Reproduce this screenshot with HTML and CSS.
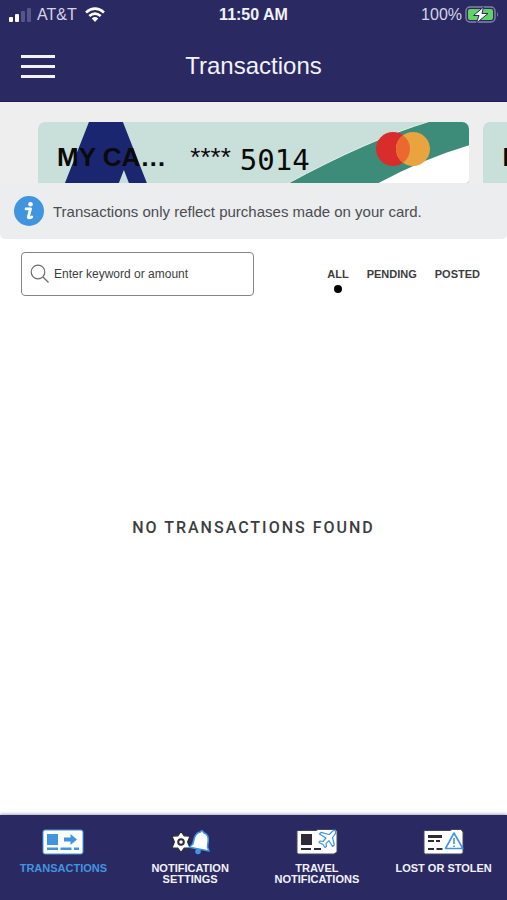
FILE: index.html
```html
<!DOCTYPE html>
<html lang="en">
<head>
<meta charset="utf-8">
<meta name="viewport" content="width=device-width, initial-scale=1">
<title>Transactions</title>
<link rel="stylesheet" href="styles.css">
</head>
<body>
<header class="top">
  <div class="status">
    <div class="status-side">
      <svg width="24" height="16" viewBox="0 0 24 16" aria-hidden="true">
        <g fill="#fff"><rect x="1" y="10" width="4" height="5" rx="1"/><rect x="7" y="7" width="4" height="8" rx="1"/></g>
        <g fill="#56548a"><rect x="13" y="4" width="4" height="11" rx="1"/><rect x="19" y="1" width="4" height="14" rx="1"/></g>
      </svg>
      <span>AT&amp;T</span>
      <svg class="wifi" width="20" height="16" viewBox="0 0 20 16" aria-hidden="true">
        <g fill="none" stroke="#fff" stroke-width="2.6"><path d="M1 5.4Q10-2.2 19 5.4"/><path d="M4.3 9Q10 4.1 15.7 9"/></g>
        <path d="M6.8 11.4Q10 8.8 13.2 11.4L10 15Z" fill="#fff"/>
      </svg>
    </div>
    <time class="clock">11:50 AM</time>
    <div class="status-side status-right">
      <span>100%</span>
      <svg width="34" height="18" viewBox="0 0 34 18" aria-hidden="true">
        <rect x="1" y="1" width="29" height="15" rx="4" fill="none" stroke="#8583a6" stroke-width="1.4"/>
        <rect x="3" y="3" width="25" height="11" rx="2" fill="#63d264"/>
        <path d="M32 6Q34 8.500 32 11Z" fill="#8583a6"/>
        <path d="M18.500 1L8.500 9.500H14L11.500 17L23 7.500H17Z" fill="#fff" stroke="#2b2962" stroke-width="1"/>
      </svg>
    </div>
  </div>
  <div class="bar">
    <button class="menu" type="button" aria-label="Menu"><span></span><span></span><span></span></button>
    <h1>Transactions</h1>
  </div>
</header>
<main>
  <section class="cards" aria-label="Cards">
    <article class="card">
      <svg class="art" viewBox="0 0 432 61" preserveAspectRatio="none" aria-hidden="true">
        <path d="M51 0H85L109 61H91L86 48L81 61H27Z" fill="#1a2670"/>
        <path d="M249 62Q330 18 393-1H433V62Z" fill="#3d8c7a" stroke="#e2f0ed"/>
        <path d="M341 61Q385 37 432 23V61Z" fill="#fff"/>
      </svg>
      <span class="card-name">MY CA…</span>
      <span class="stars">****</span>
      <span class="digits">5014</span>
      <svg class="brand" width="54" height="36" viewBox="0 0 54 36" aria-hidden="true">
        <circle cx="17" cy="18" r="17" fill="#d92d2b"/><circle cx="37" cy="18" r="17" fill="#e9a33f"/>
        <path d="M27 4.250A17 17 0 0 1 27 31.750A17 17 0 0 1 27 4.250Z" fill="#eb692f"/>
      </svg>
    </article>
    <article class="card"><span class="card-name">MY CA…</span></article>
  </section>
  <p class="notice">
    <svg width="30" height="30" viewBox="0 0 30 30" aria-hidden="true">
      <circle cx="15" cy="15" r="15" fill="#4195df"/>
      <circle cx="16.500" cy="8.200" r="2.300" fill="#fff"/>
      <path d="M12 12.800H16.500L14.300 21.200Q14.200 22.800 17.800 20.900" fill="none" stroke="#fff" stroke-width="2.800" stroke-linejoin="round" stroke-linecap="round"/>
    </svg>
    <span>Transactions only reflect purchases made on your card.</span>
  </p>
  <div class="tools">
    <label class="search">
      <svg width="20" height="20" viewBox="0 0 20 20" fill="none" stroke="#6b6b6b" stroke-width="1.200" aria-hidden="true"><circle cx="8" cy="8" r="6.800"/><path d="M13 13L18.500 18.500"/></svg>
      <input type="search" placeholder="Enter keyword or amount" aria-label="Enter keyword or amount">
    </label>
    <div class="filters">
      <button type="button" class="active" aria-pressed="true">ALL</button>
      <button type="button" aria-pressed="false">PENDING</button>
      <button type="button" aria-pressed="false">POSTED</button>
    </div>
  </div>
  <p class="empty">NO TRANSACTIONS FOUND</p>
</main>
<nav>
  <a class="current" href="#transactions">
    <svg width="42" height="26" viewBox="0 0 42 26" aria-hidden="true">
      <rect x="1" y="1" width="40" height="24" rx="2" fill="#fff" stroke="#4195df"/>
      <g fill="#4195df"><rect x="5" y="5" width="11" height="11"/><path d="M22 8.500H28.500V5L35 10.500L28.500 16V12.500H22Z"/><rect x="5" y="18.500" width="11" height="2.500"/><rect x="18.500" y="18.500" width="11" height="2.500"/><rect x="32" y="18.500" width="5" height="2.500"/></g>
    </svg>
    <span>TRANSACTIONS</span>
  </a>
  <a href="#notifications">
    <svg width="42" height="26" viewBox="0 0 42 26" aria-hidden="true">
      <path d="M12 2.500L15.200 6.800L21 7.200L18.600 13L21 18.800L15.200 19.200L12 23.500L8.800 19.200L3 18.800L5.400 13L3 7.200L8.800 6.800Z" fill="#fff" stroke="#2c2d35" stroke-width="1.200" stroke-linejoin="round"/>
      <circle cx="12" cy="13" r="2.800" fill="#fff" stroke="#2c2d35" stroke-width="2"/>
      <circle cx="29" cy="22.500" r="2.800" fill="#4195df"/>
      <path d="M31.500 3Q33 .3 34.700 3.700Q40 5.500 39.200 12L38.500 18L40 22L20.500 18.200L23.800 15L25.500 8.500Q27.500 3.300 31.500 3Z" fill="#fff" stroke="#4195df" stroke-width="1.600" stroke-linejoin="round"/>
    </svg>
    <span>NOTIFICATION SETTINGS</span>
  </a>
  <a href="#travel">
    <svg width="42" height="26" viewBox="0 0 42 26" aria-hidden="true">
      <path d="M2 1.500H20L22 .5H39L41 2V23L38 25H2L1 24V2.500Z" fill="#fff" stroke="#45465a"/>
      <g fill="#2c2d35"><rect x="5" y="5" width="11" height="11"/><rect x="5" y="19" width="10" height="2"/><rect x="18" y="19" width="7" height="2"/></g>
      <path d="M39.200 1.500Q37.500 1 35.700 3L33.200 5.500L25 3.300L23.500 5L30 9L27 12.500L24 12L23 13.500L27 15.500L29 18.500L30.500 17.500L30 14.700L33 11.700L36.500 17.500L38.300 16L36.500 8.500L38.500 6Q40.500 3.500 39.200 1.500Z" fill="#fff" stroke="#4195df" stroke-width="1.200" stroke-linejoin="round"/>
    </svg>
    <span>TRAVEL NOTIFICATIONS</span>
  </a>
  <a href="#lost">
    <svg width="42" height="26" viewBox="0 0 42 26" aria-hidden="true">
      <path d="M2 1.500H27L29 .5H38L40 3V24L38 25H2L1 24V2.500Z" fill="#fff" stroke="#45465a"/>
      <g fill="#2c2d35"><rect x="5" y="6" width="14" height="3"/><rect x="5" y="11" width="6" height="2"/><rect x="13" y="11" width="4" height="2"/><rect x="5" y="19" width="6" height="2"/><rect x="13.500" y="19" width="6" height="2"/></g>
      <path d="M31 4L39.800 19.500H22.500Z" fill="#fff" stroke="#4195df" stroke-width="1.600" stroke-linejoin="round"/>
      <path d="M31 9V15M31 16.500V18" stroke="#4195df" stroke-width="1.600"/>
    </svg>
    <span>LOST OR STOLEN</span>
  </a>
</nav>
</body>
</html>
```
FILE: styles.css
```css
* { box-sizing: border-box; }

body {
  margin: 0;
  min-height: 100vh;
  display: flex;
  flex-direction: column;
  background: #fff;
  color: #3c3d40;
  font-family: "Liberation Sans", Arial, sans-serif;
}

button, input { font: inherit; color: inherit; }
button { border: 0; padding: 0; background: none; cursor: pointer; }
svg { display: block; flex: none; }

.top {
  background: #2b2962;
  color: #f2f2fa;
  border-bottom: 1px solid #1f1b5c;
}

.status {
  display: grid;
  grid-template-columns: 1fr auto 1fr;
  align-items: center;
  height: 30px;
  padding: 0 8px;
  font-size: 16px;
}

.status-side { display: flex; align-items: center; gap: 5px; color: #d5d4e6; }
.status-right { justify-content: flex-end; gap: 3px; }
.wifi { margin-left: 3px; }
.clock { font-weight: 700; }

.bar {
  display: grid;
  grid-template-columns: 1fr auto 1fr;
  align-items: center;
  height: 71px;
  padding: 0 21px;
}

.menu { display: flex; flex-direction: column; gap: 7px; width: 34px; padding-top: 2px; }
.menu span { height: 3px; background: #f2f2fa; }

h1 { margin: 0; font-size: 24px; font-weight: 400; }

.cards {
  display: flex;
  gap: 14px;
  padding: 20px 0 0 38px;
  background: #eee;
  overflow: hidden;
}

.card {
  position: relative;
  display: flex;
  align-items: center;
  flex: 0 0 92%;
  height: 61px;
  padding: 9px 39px 0 19px;
  border-radius: 7px 7px 0 0;
  background: #c9dfda;
  color: #0a0a0a;
  overflow: hidden;
}

.card:first-child { border-bottom-right-radius: 3px; }

.art { position: absolute; inset: 0; width: 100%; height: 100%; }
.card-name, .stars, .digits, .brand { position: relative; }
.card-name { font-size: 26px; font-weight: 700; white-space: nowrap; }
.stars { margin-left: 24px; font-size: 26px; line-height: 30px; }
.digits { margin-left: 9px; padding-top: 6px; font-family: "DejaVu Sans Mono", monospace; font-size: 29px; }
.brand { margin-left: auto; align-self: flex-start; }

main { flex: 1; display: flex; flex-direction: column; }

.notice {
  display: flex;
  align-items: center;
  gap: 9px;
  min-height: 56px;
  margin: 0;
  padding: 0 14px;
  border-radius: 0 0 5px 5px;
  background: #ecedef;
  color: #4b4c50;
  font-size: 15px;
}

.tools {
  display: flex;
  justify-content: space-between;
  align-items: flex-start;
  padding: 13px 27px 0 21px;
}

.search {
  display: flex;
  align-items: center;
  gap: 4px;
  flex: 0 1 233px;
  height: 44px;
  padding: 0 8px;
  border: 1px solid #858585;
  border-radius: 4px;
}

.search input {
  flex: 1;
  min-width: 0;
  border: 0;
  padding: 0;
  outline: 0;
  background: none;
  font-size: 12px;
}

.search input::placeholder { color: #3c3d40; opacity: 1; }

.filters { display: flex; align-items: flex-start; gap: 18px; padding-top: 15px; }

.filters button {
  display: flex;
  flex-direction: column;
  align-items: center;
  gap: 4px;
  font-size: 11px;
  line-height: 14px;
  font-weight: 700;
}

.filters .active::after {
  content: "";
  width: 8px;
  height: 8px;
  border-radius: 50%;
  background: #000;
}

.empty {
  margin: auto;
  padding-bottom: 56px;
  font-family: Roboto, "Liberation Sans", sans-serif;
  font-size: 16px;
  font-weight: 500;
  letter-spacing: 2px;
  text-align: center;
}

nav {
  display: grid;
  grid-template-columns: repeat(4, 1fr);
  min-height: 85px;
  padding-top: 14px;
  background: #2b2962;
  box-shadow: 0 -1px 3px #a9a8bd;
}

nav a {
  display: flex;
  flex-direction: column;
  align-items: center;
  gap: 8px;
  color: #f2f2fa;
  font-size: 11px;
  line-height: 11px;
  font-weight: 700;
  text-align: center;
  text-decoration: none;
}

nav .current { color: #4195df; }
```
